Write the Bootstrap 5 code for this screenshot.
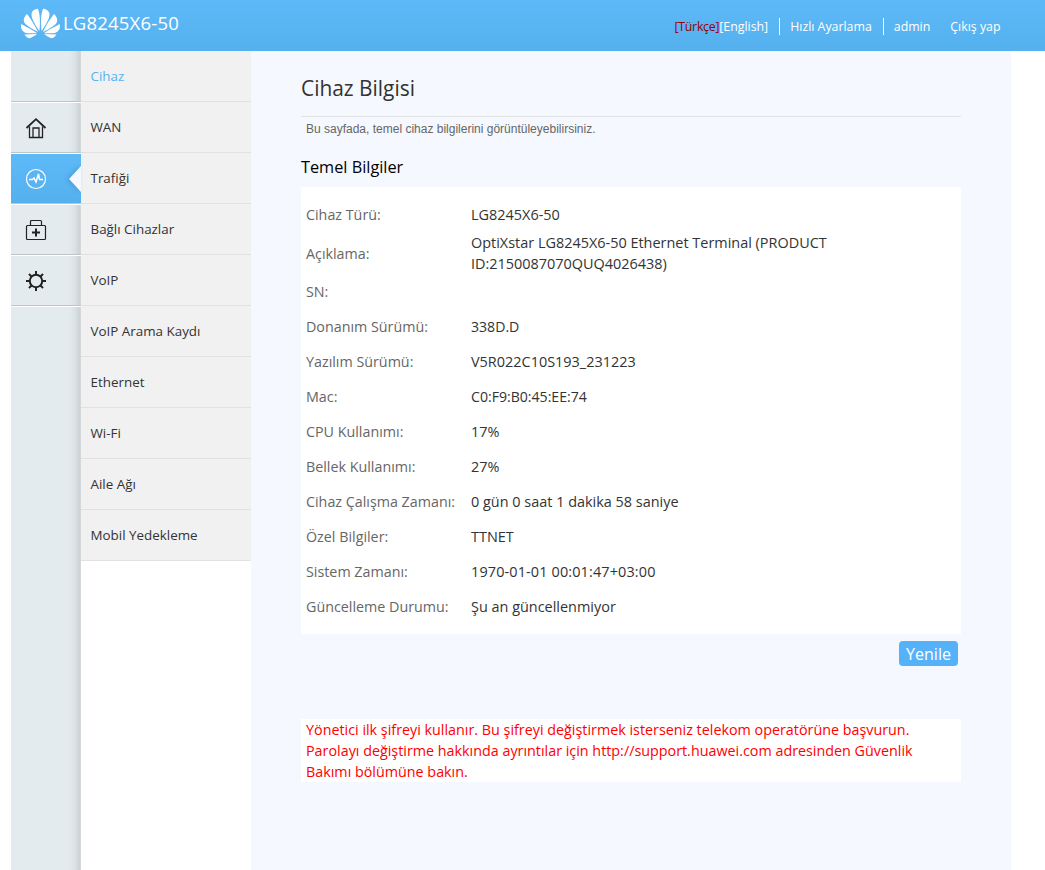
<!DOCTYPE html>
<html lang="tr">
<head>
<meta charset="utf-8">
<title>LG8245X6-50</title>
<link rel="stylesheet" href="https://cdn.jsdelivr.net/npm/bootstrap@5.3.0/dist/css/bootstrap.min.css">
<style>
body{font-family:"Open Sans","Noto Sans",sans-serif;color:#333;background:#fff;height:870px;overflow:hidden}
.topbar{height:51px;background:linear-gradient(#5eb9f8,#55b0ee);color:#fff;padding:0 44.5px 0 21px}
.logo{width:39px;height:39px;margin:4px 3px 0 0}
.model{font-size:18.5px;letter-spacing:.2px;line-height:24px;margin-top:11px}
.toplinks{font-size:12.35px;line-height:17px;margin-top:18px}
.lang-on{color:#900;letter-spacing:-.25px}
.english{padding-right:11px}
.bar-l{border-left:1px solid #fff;padding-left:10px}
.quick{padding-right:11px}
.logout{padding-left:20px}
.shell{width:1000px;margin-left:11px;height:819px}
.rail{width:70px;background:linear-gradient(90deg,#e4ebee 58px,#dbe2e5 64px,#cbd1d5 69px,#dcdfe0 70px)}
.rail-item{height:51px;padding-left:14px;border-bottom:1px solid #bfc4c7;border-top:1px solid #fff}
.rail-item:first-child{border-top:0}
.rail-item.on{background:linear-gradient(#5eb9f8,#55b0ee)}
.arrow{right:0;top:10px;filter:drop-shadow(-2px 0 2px rgba(40,110,160,.35))}
.side{width:170px}
.side a{height:51px;padding:0 0 1px 9.5px;background:#f1f1f1;border-bottom:1px solid #e1e1e1;font-size:13.4px;line-height:20px;color:#333;text-decoration:none}
.side a.on{color:#56b2f0}
.main{background:#f5f8fe;padding:0 50px}
h1{font-size:20.9px;line-height:28px;margin:23px 0 14px;font-weight:400}
.intro{font:12px/17px "Liberation Sans",Arial,sans-serif;color:#666;border-top:1px solid #e2e3e5;padding:4px 5px 0}
h2{font-size:16.3px;line-height:22px;margin:18px 0 9px;font-weight:400;color:#000}
.info{background:#fff;padding:10px 5px;height:447px}
.info-row{height:35px;font-size:14.3px;line-height:21px}
.info-row.tall{height:42px}
.info-row dt{width:165px;font-weight:400;color:#666;white-space:nowrap}
.info-row dd{margin:0;width:400px;font-size:14.45px;white-space:nowrap}
.info-row .mac{font-size:14.1px}
.info-row .clock{letter-spacing:.13px}
.refresh{background:#56b2f8;color:#fff;border:0;border-radius:4px;width:59px;height:25px;font-size:16px;line-height:24px;margin:7px 3px 0 0;padding:0}
.notice{background:#fff;color:#f00;font-size:14.33px;line-height:21px;margin-top:53px;padding:0 5px;white-space:nowrap}
</style>
<script src="https://cdn.jsdelivr.net/npm/bootstrap@5.3.0/dist/js/bootstrap.bundle.min.js"></script>
</head>
<body>
<header class="topbar d-flex align-items-start">
  <svg class="logo" viewBox="0 0 24 24" fill="#fff"><path d="M3.67 6.14S1.82 7.91 1.72 9.78v.35c.08 1.51 1.22 2.4 1.22 2.4 1.83 1.79 6.26 4.04 7.3 4.55 0 0 .06.03.1-.01l.02-.04v-.04C7.52 10.8 3.67 6.14 3.67 6.14zM9.65 18.6c-.02-.08-.1-.08-.1-.08l-7.38.26c.8 1.43 2.15 2.53 3.56 2.2.96-.25 3.16-1.78 3.88-2.3.06-.05.04-.09.04-.09zm.08-.78C6.49 15.63.21 12.28.21 12.28c-.15.46-.2.9-.21 1.3v.07c0 1.07.4 1.82.4 1.82.8 1.69 2.34 2.2 2.34 2.2.7.3 1.4.31 1.4.31.12.02 4.4 0 5.54 0 .05 0 .08-.05.08-.05v-.06c0-.03-.03-.05-.03-.05zM9.06 3.19a3.42 3.42 0 00-2.57 3.15v.41c.03.6.16 1.05.16 1.05.66 2.9 3.86 7.65 4.55 8.65.05.05.1.03.1.03a.1.1 0 00.06-.1c1.06-10.6-1.11-13.42-1.11-13.42-.32.02-1.19.23-1.19.23zm8.299 2.27s-.49-1.8-2.44-2.28c0 0-.57-.14-1.17-.22 0 0-2.18 2.81-1.12 13.43.01.07.06.08.06.08.07.03.1-.03.1-.03.72-1.03 3.9-5.76 4.55-8.64 0 0 .36-1.4.02-2.34zm-2.92 13.07s-.07 0-.09.05c0 0-.01.07.03.1.7.51 2.85 2 3.88 2.3 0 0 .16.05.43.06h.14c.69-.02 1.9-.37 3-2.26l-7.4-.25zm7.83-8.41c.14-2.06-1.94-3.97-1.94-3.98 0 0-3.85 4.66-6.67 10.8 0 0-.03.08.02.13l.04.01h.06c1.06-.53 5.46-2.77 7.28-4.54 0 0 1.15-.93 1.21-2.42zm1.52 2.14s-6.28 3.37-9.52 5.55c0 0-.05.04-.03.11 0 0 .03.06.07.06 1.16 0 5.56 0 5.67-.02 0 0 .57-.02 1.27-.29 0 0 1.56-.5 2.37-2.27 0 0 .73-1.45.17-3.14z"/></svg>
  <span class="model">LG8245X6-50</span>
  <nav class="toplinks d-flex ms-auto">
    <span class="lang-on">[Türkçe]</span><span class="english">[English]</span>
    <span class="bar-l quick">Hızlı Ayarlama</span>
    <span class="bar-l">admin</span>
    <span class="logout">Çıkış yap</span>
  </nav>
</header>
<div class="shell d-flex">
  <div class="rail">
    <div class="rail-item"></div>
    <div class="rail-item d-flex align-items-center"><svg width="22" height="22" viewBox="0 0 22 22" fill="none" stroke="#222"><path d="M1.500 11 11 2.200 20.500 11" stroke-width="1.800"/><path d="M4.500 9.500v11h13v-11M8 20v-9h6v9" stroke-width="1.300"/></svg></div>
    <div class="rail-item on d-flex align-items-center position-relative"><svg width="22" height="22" viewBox="0 0 22 22" fill="none" stroke="#fff"><circle cx="11" cy="11" r="9.500" stroke-width="1.200"/><path d="M4 11.500h3.500l1.500-1.500 2 4L13.500 6l1 5.500h3.500" stroke-width="1.500"/></svg>
      <svg class="arrow position-absolute" width="14" height="30" viewBox="0 0 14 30"><path d="M14 2 2 15 14 28z" fill="#f5f8fe"/></svg></div>
    <div class="rail-item d-flex align-items-center"><svg width="22" height="22" viewBox="0 0 22 22" fill="none" stroke="#222"><rect x="1.500" y="6.500" width="19" height="14" rx="1" stroke-width="1.200"/><path d="M5.500 6V2.500q0-1 1-1h9q1 0 1 1V6" stroke-width="1.200"/><path d="M7 13.500h8M11 9.500v8" stroke-width="2"/></svg></div>
    <div class="rail-item d-flex align-items-center"><svg width="22" height="22" viewBox="0 0 22 22" fill="none" stroke="#222" stroke-width="2"><circle cx="11" cy="11" r="6.200"/><path d="M11 1v4M11 17v4M1 11h4M17 11h4M4 4l2.500 2.500M15.500 15.500 18 18M4 18l2.500-2.500M15.500 6.500 18 4"/></svg></div>
    <div class="rail-item border-bottom-0"></div>
  </div>
  <nav class="side">
    <a class="on d-flex align-items-center" href="#"><span>Cihaz</span></a>
    <a class="d-flex align-items-center" href="#"><span>WAN</span></a>
    <a class="d-flex align-items-center" href="#"><span>Trafiği</span></a>
    <a class="d-flex align-items-center" href="#"><span>Bağlı Cihazlar</span></a>
    <a class="d-flex align-items-center" href="#"><span>VoIP</span></a>
    <a class="d-flex align-items-center" href="#"><span>VoIP Arama Kaydı</span></a>
    <a class="d-flex align-items-center" href="#"><span>Ethernet</span></a>
    <a class="d-flex align-items-center" href="#"><span>Wi-Fi</span></a>
    <a class="d-flex align-items-center" href="#"><span>Aile Ağı</span></a>
    <a class="d-flex align-items-center" href="#"><span>Mobil Yedekleme</span></a>
  </nav>
  <main class="main flex-grow-1 d-flex flex-column">
    <h1>Cihaz Bilgisi</h1>
    <div class="intro">Bu sayfada, temel cihaz bilgilerini görüntüleyebilirsiniz.</div>
    <h2>Temel Bilgiler</h2>
    <dl class="info mb-0">
      <div class="info-row d-flex align-items-center"><dt>Cihaz Türü:</dt><dd>LG8245X6-50</dd></div>
      <div class="info-row tall d-flex align-items-center"><dt>Açıklama:</dt><dd>OptiXstar LG8245X6-50 Ethernet Terminal (PRODUCT<br>ID:2150087070QUQ4026438)</dd></div>
      <div class="info-row d-flex align-items-center"><dt>SN:</dt><dd></dd></div>
      <div class="info-row d-flex align-items-center"><dt>Donanım Sürümü:</dt><dd class="mac">338D.D</dd></div>
      <div class="info-row d-flex align-items-center"><dt>Yazılım Sürümü:</dt><dd>V5R022C10S193_231223</dd></div>
      <div class="info-row d-flex align-items-center"><dt>Mac:</dt><dd class="mac">C0:F9:B0:45:EE:74</dd></div>
      <div class="info-row d-flex align-items-center"><dt>CPU Kullanımı:</dt><dd>17%</dd></div>
      <div class="info-row d-flex align-items-center"><dt>Bellek Kullanımı:</dt><dd>27%</dd></div>
      <div class="info-row d-flex align-items-center"><dt>Cihaz Çalışma Zamanı:</dt><dd>0 gün 0 saat 1 dakika 58 saniye</dd></div>
      <div class="info-row d-flex align-items-center"><dt>Özel Bilgiler:</dt><dd>TTNET</dd></div>
      <div class="info-row d-flex align-items-center"><dt>Sistem Zamanı:</dt><dd class="clock">1970-01-01 00:01:47+03:00</dd></div>
      <div class="info-row d-flex align-items-center"><dt>Güncelleme Durumu:</dt><dd>Şu an güncellenmiyor</dd></div>
    </dl>
    <button class="refresh align-self-end">Yenile</button>
    <div class="notice">Yönetici ilk şifreyi kullanır. Bu şifreyi değiştirmek isterseniz telekom operatörüne başvurun.<br>Parolayı değiştirme hakkında ayrıntılar için http://support.huawei.com adresinden Güvenlik<br>Bakımı bölümüne bakın.</div>
  </main>
</div>
</body>
</html>
